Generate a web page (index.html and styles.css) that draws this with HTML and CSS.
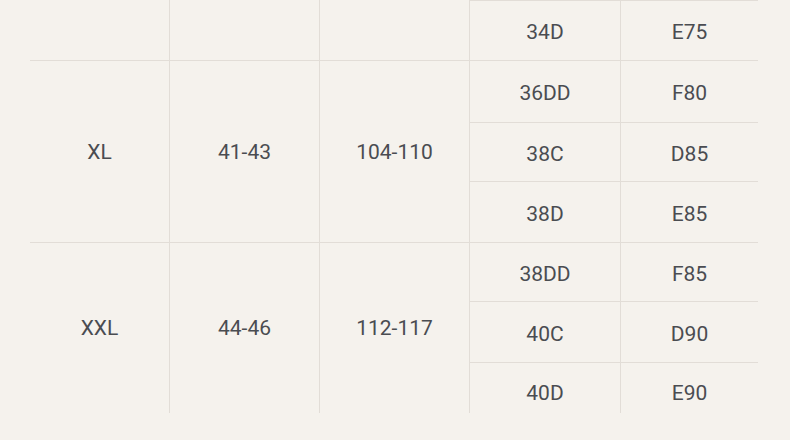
FILE: index.html
```html
<!DOCTYPE html>
<html lang="en">
<head>
<meta charset="utf-8">
<link rel="stylesheet" href="styles.css">
</head>
<body>
<div class="size-table">
  <div class="cell span1"></div>
  <div class="cell span1"></div>
  <div class="cell span1"></div>
  <div class="cell top">34D</div>
  <div class="cell top last">E75</div>

  <div class="cell group">XL</div>
  <div class="cell group">41-43</div>
  <div class="cell group">104-110</div>
  <div class="cell">36DD</div>
  <div class="cell last">F80</div>
  <div class="cell c4">38C</div>
  <div class="cell last c5">D85</div>
  <div class="cell c4">38D</div>
  <div class="cell last c5">E85</div>

  <div class="cell group end">XXL</div>
  <div class="cell group end">44-46</div>
  <div class="cell group end">112-117</div>
  <div class="cell">38DD</div>
  <div class="cell last">F85</div>
  <div class="cell c4">40C</div>
  <div class="cell last c5">D90</div>
  <div class="cell c4 end">40D</div>
  <div class="cell last c5 end">E90</div>
</div>
</body>
</html>
```

FILE: styles.css
```css
html, body {
  margin: 0;
  padding: 0;
  background: #f5f2ed;
}

.size-table {
  margin-left: 30px;
  width: 728px;
  display: grid;
  grid-template-columns: 140px 150px 150px 151px 137px;
  grid-template-rows: 61px 62px 59px 61px 59px 61px 50px;
  font-family: Roboto, "DejaVu Sans Condensed", sans-serif;
  font-size: 21px;
  color: #4a4c51;
}

.cell {
  box-sizing: border-box;
  display: flex;
  align-items: center;
  justify-content: center;
  padding-top: 3px;
  border-right: 1px solid #e2ddd7;
  border-bottom: 1px solid #e2ddd7;
}

.cell.top {
  border-top: 1px solid #e2ddd7;
}

.cell.last {
  border-right: none;
}

.cell.group {
  grid-row: span 3;
  padding-top: 1px;
}

.cell.group.end {
  padding-top: 0;
  padding-bottom: 1px;
}

.cell.c4 {
  grid-column: 4;
}

.cell.c5 {
  grid-column: 5;
}

.cell.end {
  border-bottom: none;
}

.cell.end.c4,
.cell.end.c5 {
  padding-top: 9px;
}
```
